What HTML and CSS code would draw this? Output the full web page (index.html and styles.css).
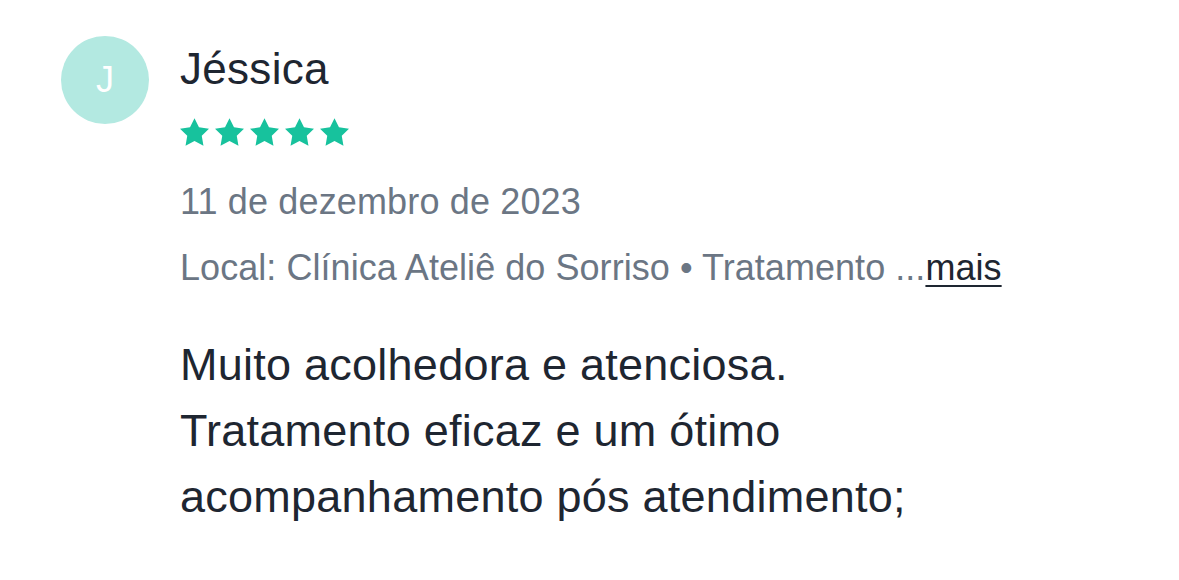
FILE: index.html
```html
<!DOCTYPE html>
<html lang="pt-BR">
<head>
  <meta charset="UTF-8">
  <meta name="viewport" content="width=device-width, initial-scale=1.0">
  <title>Avaliação</title>
  <link rel="stylesheet" href="styles.css">
</head>
<body>
  <div class="review">
    <div class="avatar">J</div>
    <div class="review-body">
      <div class="name">Jéssica</div>
      <div class="stars">
        <svg viewBox="2 2 20 19.02"><path d="M12 2l3.09 6.26L22 9.27l-5 4.87 1.18 6.88L12 17.77l-6.18 3.25L7 14.14 2 9.27l6.91-1.01L12 2z"/></svg>
        <svg viewBox="2 2 20 19.02"><path d="M12 2l3.09 6.26L22 9.27l-5 4.87 1.18 6.88L12 17.77l-6.18 3.25L7 14.14 2 9.27l6.91-1.01L12 2z"/></svg>
        <svg viewBox="2 2 20 19.02"><path d="M12 2l3.09 6.26L22 9.27l-5 4.87 1.18 6.88L12 17.77l-6.18 3.25L7 14.14 2 9.27l6.91-1.01L12 2z"/></svg>
        <svg viewBox="2 2 20 19.02"><path d="M12 2l3.09 6.26L22 9.27l-5 4.87 1.18 6.88L12 17.77l-6.18 3.25L7 14.14 2 9.27l6.91-1.01L12 2z"/></svg>
        <svg viewBox="2 2 20 19.02"><path d="M12 2l3.09 6.26L22 9.27l-5 4.87 1.18 6.88L12 17.77l-6.18 3.25L7 14.14 2 9.27l6.91-1.01L12 2z"/></svg>
      </div>
      <div class="date">11 de dezembro de 2023</div>
      <div class="place">Local: Clínica Ateliê do Sorriso • Tratamento ...<a href="#" class="more">mais</a></div>
      <p class="text">Muito acolhedora e atenciosa.<br>Tratamento eficaz e um ótimo<br>acompanhamento pós atendimento;</p>
    </div>
  </div>
</body>
</html>
```

FILE: styles.css
```css
/* página branca, fonte tipo Helvetica */
body {
  margin: 0;
  padding: 36px 0 0 61px;
  background: #ffffff;
  font-family: "Liberation Sans", Arial, sans-serif;
  color: #1e2631;
}

.review {
  display: flex;
  gap: 31px;
}

/* círculo com a inicial */
.avatar {
  flex: none;
  width: 88px;
  height: 88px;
  border-radius: 50%;
  background: #b3e9e1;
  color: #ffffff;
  font-size: 36px;
  display: flex;
  align-items: center;
  justify-content: center;
}

.review-body {
  display: flex;
  flex-direction: column;
}

.name {
  font-size: 44px;
  line-height: 52px;
  margin-top: 7px;
  letter-spacing: 0.3px;
}

.stars {
  display: flex;
  gap: 6px;
  margin-top: 23px;
}

.stars svg {
  width: 29px;
  height: 28px;
  fill: #17c29d;
}

.date,
.place {
  font-size: 36px;
  line-height: 44px;
  color: #6b7684;
}

.date {
  margin-top: 34px;
  letter-spacing: 0.15px;
}

.place {
  margin-top: 22px;
  letter-spacing: 0.05px;
}

.more {
  color: #1e2631;
  text-decoration: underline;
  text-underline-offset: 5px;
  text-decoration-thickness: 2px;
}

.text {
  margin: 42px 0 0;
  font-size: 45px;
  line-height: 66px;
  letter-spacing: 0.25px;
}
```
